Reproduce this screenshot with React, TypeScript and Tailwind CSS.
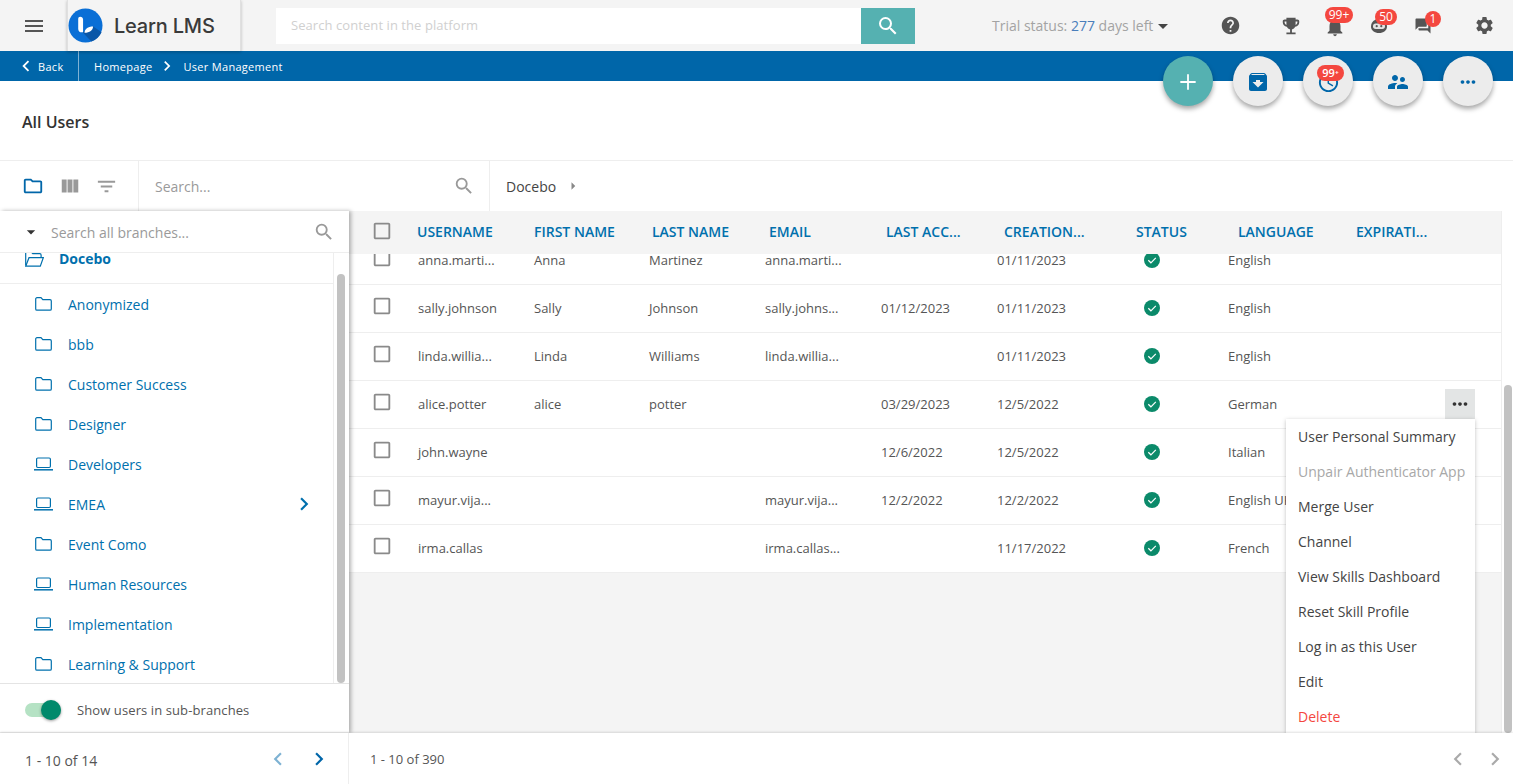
// App.tsx - user management page
import { Plus } from "lucide-react";
import {
  MdAccessTime,
  MdArchive,
  MdArrowDropDown,
  MdCheckBoxOutlineBlank,
  MdChevronLeft,
  MdChevronRight,
  MdEmojiEvents,
  MdFilterList,
  MdHelp,
  MdMenu,
  MdMoreHoriz,
  MdNotifications,
  MdOutlineFolder,
  MdQuestionAnswer,
  MdSearch,
  MdSettings,
  MdSupervisorAccount,
  MdViewColumn,
} from "react-icons/md";

const users = [
  { u: "anna.marti...", f: "Anna", l: "Martinez", e: "anna.marti...", a: "", c: "01/11/2023", g: "English" },
  { u: "sally.johnson", f: "Sally", l: "Johnson", e: "sally.johns...", a: "01/12/2023", c: "01/11/2023", g: "English" },
  { u: "linda.willia...", f: "Linda", l: "Williams", e: "linda.willia...", a: "", c: "01/11/2023", g: "English" },
  { u: "alice.potter", f: "alice", l: "potter", e: "", a: "03/29/2023", c: "12/5/2022", g: "German" },
  { u: "john.wayne", f: "", l: "", e: "", a: "12/6/2022", c: "12/5/2022", g: "Italian" },
  { u: "mayur.vija...", f: "", l: "", e: "mayur.vija...", a: "12/2/2022", c: "12/2/2022", g: "English UK" },
  { u: "irma.callas", f: "", l: "", e: "irma.callas...", a: "", c: "11/17/2022", g: "French" },
];

const branches = [
  { name: "Anonymized", laptop: false },
  { name: "bbb", laptop: false },
  { name: "Customer Success", laptop: false },
  { name: "Designer", laptop: false },
  { name: "Developers", laptop: true },
  { name: "EMEA", laptop: true, more: true },
  { name: "Event Como", laptop: false },
  { name: "Human Resources", laptop: true },
  { name: "Implementation", laptop: true },
  { name: "Learning & Support", laptop: false },
];

const menuItems = [
  "User Personal Summary",
  "Unpair Authenticator App",
  "Merge User",
  "Channel",
  "View Skills Dashboard",
  "Reset Skill Profile",
  "Log in as this User",
  "Edit",
  "Delete",
];

const columns = [
  { name: "USERNAME", w: "w-[117px]" },
  { name: "FIRST NAME", w: "w-[118px]" },
  { name: "LAST NAME", w: "w-[117px]" },
  { name: "EMAIL", w: "w-[117px]" },
  { name: "LAST ACC...", w: "w-[118px]" },
  { name: "CREATION...", w: "w-[132px]" },
  { name: "STATUS", w: "w-[102px]" },
  { name: "LANGUAGE", w: "w-[118px]" },
  { name: "EXPIRATI...", w: "w-[100px]" },
];

const Badge = ({ text, className }: { text: string; className: string }) => (
  <span
    className={`absolute h-[16px] rounded-full bg-[#f4473f] text-white text-[12px] leading-[16px] text-center ${className}`}
  >
    {text}
  </span>
);

const RobotIcon = () => (
  <svg viewBox="0 0 24 24" className="w-[24px] h-[24px] shrink-0" fill="#555">
    <path d="M12 5c-4.500 0-8 3-8 7.500C4 16.500 7.500 19 12 19s8-2.500 8-6.500C20 8 16.500 5 12 5z" />
    <rect x="6" y="9.500" width="12" height="5.500" rx="2.700" fill="#e4e4e4" />
    <circle cx="9.700" cy="12.200" r="1.100" />
    <circle cx="14.300" cy="12.200" r="1.100" />
  </svg>
);

const FolderIcon = () => (
  <svg viewBox="0 0 17 14" className="w-[17px] h-[14px] shrink-0" fill="none" stroke="currentColor" strokeWidth="1.200">
    <path d="M2 .7h4l1.800 2h7.200a1.300 1.300 0 0 1 1.300 1.300v7.900a1.300 1.300 0 0 1-1.300 1.300H2A1.300 1.300 0 0 1 .7 11.900V2A1.300 1.300 0 0 1 2 .7z" />
  </svg>
);

const LaptopIcon = () => (
  <svg viewBox="0 0 19 14" className="w-[19px] h-[14px] -ml-[1px] -mr-[1px] shrink-0" fill="none" stroke="currentColor" strokeWidth="1.200">
    <rect x="2.600" y="1" width="13.800" height="9.500" rx="1.200" />
    <path d="M0 12.800h19" strokeWidth="1.500" />
  </svg>
);

const OpenFolderIcon = () => (
  <svg viewBox="0 0 19 16" className="w-[19px] h-[16px] shrink-0 -mt-[2px]" fill="none" stroke="currentColor" strokeWidth="1.200">
    <path d="M.7 14.500V2A1.300 1.300 0 0 1 2 .7h4l1.800 2h7a1.300 1.300 0 0 1 1.300 1.300v2.700" />
    <path d="M.7 15.200 4 6.700h14.300l-3 8.500z" />
  </svg>
);

const StatusIcon = () => (
  <svg viewBox="0 0 16 16" className="w-[16px] h-[16px] -mt-[1px]">
    <circle cx="8" cy="8" r="8" fill="#0b8a6a" />
    <path d="M4.300 8.300 6.900 10.800 11.800 5.800" fill="none" stroke="#fff" strokeWidth="1.200" />
  </svg>
);

const LogoMark = () => (
  <svg viewBox="0 0 36 36" className="w-[35px] h-[35px] shrink-0">
    <circle cx="18" cy="18" r="17.500" fill="#0a6fd6" />
    <path d="M15 25 26 19 34.500 25A17.500 17.500 0 0 1 24 34.500z" fill="#0a57a8" />
    <path d="M12.500 9c1.800 0 3 1.200 3 3v13h-1.500c-2 0-3.500-1.500-3.500-3.500V11c0-1.200.8-2 2-2z" fill="#fff" />
    <path d="M17 25.500c0-3.800 3.500-6.500 8.800-6.500 0 3.800-3.500 6.500-8.800 6.500z" fill="#fff" />
  </svg>
);

const HeaderIcon = ({ className, children }: { className: string; children: React.ReactNode }) => (
  <div className={`relative w-[20px] shrink-0 flex items-center justify-center text-[#555] ${className}`}>{children}</div>
);

const RoundButton = ({ children, teal }: { children: React.ReactNode; teal?: boolean }) => (
  <div
    className={`relative w-[50px] h-[50px] rounded-full flex items-center justify-center shadow-[0_3px_5px_rgba(0,0,0,0.35)] ${
      teal ? "bg-[#55b1b1] text-white" : "bg-[#ececec] text-[#0066a9]"
    }`}
  >
    {children}
  </div>
);

const TopBar = () => (
  <header className="h-[51px] shrink-0 bg-[#f4f4f4] flex items-center relative">
    <div className="w-[67px] shrink-0 flex justify-center">
      <MdMenu className="text-[#555] text-[24px]" />
    </div>
    <div className="w-[174px] shrink-0 h-[51px] flex items-center gap-[11px] border-x border-[#e0e0e0] shadow-[0_1px_3px_rgba(0,0,0,0.25)]">
      <LogoMark />
      <span className="text-[20px] font-medium text-[#3a3a3a] font-['Inter',sans-serif] tracking-[-0.2px]">
        Learn LMS
      </span>
    </div>
    <div className="ml-[35px] w-[585px] shrink-0 h-[36px] bg-white flex items-center pl-[15px] pt-[1px] text-[13px] tracking-[0.07px] text-[#d0d0d0]">
      Search content in the platform
    </div>
    <div className="w-[54px] shrink-0 h-[36px] bg-[#55b1b1] flex items-center justify-center text-white">
      <MdSearch className="text-[24px]" />
    </div>
    <div className="ml-[77px] shrink-0 flex items-center text-[14px] text-[#a3a3a3] w-[190px]">
      Trial status:&nbsp;<span className="text-[#4a7ebb]">277</span>&nbsp;days left
      <MdArrowDropDown className="text-[#444] text-[24px] -ml-[2px]" />
    </div>
    <HeaderIcon className="ml-[38px]">
      <MdHelp className="text-[21px] shrink-0" />
    </HeaderIcon>
    <HeaderIcon className="ml-[41px]">
      <MdEmojiEvents className="text-[22px] shrink-0" />
    </HeaderIcon>
    <HeaderIcon className="ml-[24px]">
      <MdNotifications className="text-[22px] shrink-0 mt-[2px]" />
      <Badge text="99+" className="w-[28px] -top-[7px] left-0" />
    </HeaderIcon>
    <HeaderIcon className="ml-[24px]">
      <RobotIcon />
      <Badge text="50" className="w-[22px] -top-[5px] left-[6px]" />
    </HeaderIcon>
    <HeaderIcon className="ml-[24px]">
      <MdQuestionAnswer className="text-[18px] shrink-0" />
      <Badge text="1" className="w-[16px] -top-[6px] left-[12px]" />
    </HeaderIcon>
    <HeaderIcon className="ml-[41px]">
      <MdSettings className="text-[21px] shrink-0" />
    </HeaderIcon>
  </header>
);

const Breadcrumb = () => (
  <nav className="h-[30px] shrink-0 bg-[#0066a9] flex items-center text-white text-[11px] font-medium tracking-[0.3px]">
    <div className="w-[79px] h-full flex items-center pl-[15px] gap-[1px] border-r border-[#7fb2d4]">
      <MdChevronLeft className="text-[22px] shrink-0" />
      <span className="mt-[2px]">Back</span>
    </div>
    <span className="ml-[15px] mt-[2px]">Homepage</span>
    <MdChevronRight className="text-[20px] ml-[5px] mr-[6px]" />
    <span className="mt-[2px]">User Management</span>
  </nav>
);

const Toolbar = () => (
  <div className="h-[51px] shrink-0 flex border-t border-[#eeeeee]">
    <div className="w-[139px] flex items-center pl-[22px] border-r border-[#eeeeee]">
      <MdOutlineFolder className="text-[#0066a9] text-[22px]" />
      <MdViewColumn className="text-[#999] text-[22px] ml-[15px]" />
      <MdFilterList className="text-[#999] text-[23px] ml-[14px]" />
    </div>
    <div className="w-[351px] flex items-center justify-between pl-[16px] pr-[14px] border-r border-[#eeeeee] text-[14px] text-[#9a9a9a]">
      <span>Search...</span>
      <MdSearch className="text-[#999] text-[22px]" />
    </div>
    <div className="flex items-center pl-[16px] text-[14px] text-[#444]">
      Docebo
      <MdArrowDropDown className="text-[#888] text-[18px] -rotate-90 ml-[8px]" />
    </div>
  </div>
);

const BranchPanel = () => (
  <aside className="w-[349px] shrink-0 flex flex-col bg-white shadow-[2px_0_4px_rgba(0,0,0,0.3)] z-10 relative">
    <div className="h-[42px] shrink-0 flex items-center pl-[21px] pr-[14px] pt-[1px] border-b border-[#eeeeee] text-[14px] text-[#9a9a9a]">
      <MdArrowDropDown className="text-[#333] text-[20px]" />
      <span className="ml-[10px] flex-1">Search all branches...</span>
      <MdSearch className="text-[#999] text-[22px]" />
    </div>
    <div className="flex-1 flex min-h-0 overflow-hidden border-b border-[#e4e4e4]">
      <div className="flex-1 text-[#0070ad] text-[14px]">
        <div className="h-[31px] flex items-start pl-[25px] gap-[15px] border-b border-[#eeeeee] font-bold text-[14px]">
          <OpenFolderIcon />
          <span className="-mt-[5px]">Docebo</span>
        </div>
        {branches.map((b) => (
          <div key={b.name} className="h-[40px] flex items-center pl-[35px] pr-[18px] gap-[16px]">
            {b.laptop ? <LaptopIcon /> : <FolderIcon />}
            <span className="flex-1 text-[14px]">{b.name}</span>
            {b.more && <MdChevronRight className="text-[26px] -mr-[2px]" />}
          </div>
        ))}
      </div>
      <div className="w-[16px] shrink-0 border-l border-[#eeeeee] pt-[21px] pl-[3px]">
        <div className="w-[8px] h-full rounded-full bg-[#c2c2c2]" />
      </div>
    </div>
    <div className="h-[49px] shrink-0 flex items-center pl-[25px] pt-[4px] border-b border-[#eeeeee]">
      <div className="relative w-[36px] h-[14px] rounded-full bg-[#b5e2c4]">
        <div className="absolute -top-[3px] left-[16px] w-[20px] h-[20px] rounded-full bg-[#00896b] shadow-[0_1px_3px_rgba(0,0,0,0.4)]" />
      </div>
      <span className="ml-[16px] mt-[2px] text-[13px] tracking-[0.1px] text-[#555]">Show users in sub-branches</span>
    </div>
  </aside>
);

const UserTable = () => (
  <section className="flex-1 min-w-0 flex bg-[#f4f4f4] relative">
    <div className="flex-1 min-w-0 flex flex-col">
      <div className="h-[43px] shrink-0 flex items-center bg-[#f4f4f4] pl-[22px] pb-[2px] text-[14px] font-semibold text-[#0070ad]">
        <div className="w-[46px] shrink-0 -mt-[1px]">
          <MdCheckBoxOutlineBlank className="text-[#8a8a8a] text-[22px]" />
        </div>
        {columns.map((c) => (
          <div key={c.name} className={`${c.w} shrink-0 whitespace-nowrap`}>
            {c.name}
          </div>
        ))}
      </div>
      <div className="overflow-hidden">
        <div className="-mt-[17px]">
          {users.map((r) => (
            <div
              key={r.u}
              className="h-[48px] bg-white flex items-center border-b border-[#eeeeee] pl-[69px] text-[13px] text-[#555] relative"
            >
              <MdCheckBoxOutlineBlank className="absolute left-[22px] top-[10px] text-[#8a8a8a] text-[22px]" />
              <div className="w-[116px] shrink-0">{r.u}</div>
              <div className="w-[115px] shrink-0">{r.f}</div>
              <div className="w-[116px] shrink-0">{r.l}</div>
              <div className="w-[116px] shrink-0">{r.e}</div>
              <div className="w-[116px] shrink-0">{r.a}</div>
              <div className="w-[116px] shrink-0">{r.c}</div>
              <div className="w-[115px] shrink-0 pl-[31px]">
                <StatusIcon />
              </div>
              <div className="w-[100px] shrink-0 whitespace-nowrap">{r.g}</div>
              {r.u === "alice.potter" && (
                <div className="absolute left-[1096px] top-[8px] w-[30px] h-[30px] bg-[#e3e5e5] flex items-center justify-center text-[#333]">
                  <MdMoreHoriz className="text-[22px]" />
                </div>
              )}
            </div>
          ))}
        </div>
      </div>
    </div>
    <div className="w-[12px] shrink-0 bg-white border-l border-[#eeeeee] pt-[174px] pl-[2px]">
      <div className="w-[8px] h-full rounded-full bg-[#c2c2c2]" />
    </div>
    <div className="absolute left-[937px] top-[208px] w-[189px] h-[314px] overflow-hidden bg-white shadow-[0_1px_4px_rgba(0,0,0,0.25)] pl-[12px] text-[14px] text-[#444]">
      {menuItems.map((m) => (
        <div
          key={m}
          className={`h-[35px] flex items-center whitespace-nowrap ${
            m === "Delete" ? "text-[#f4473f]" : m.startsWith("Unpair") ? "text-[#a8a8a8]" : ""
          }`}
        >
          {m}
        </div>
      ))}
    </div>
  </section>
);

const Footer = () => (
  <footer className="h-[51px] shrink-0 flex bg-white z-20 shadow-[0_-1px_2px_rgba(0,0,0,0.12)] text-[14px] text-[#555]">
    <div className="w-[349px] flex items-center pl-[25px] pr-[16px] pt-[3px] border-r border-[#eeeeee]">
      <span className="flex-1">1 - 10 of 14</span>
      <MdChevronLeft className="text-[#7eb2d3] text-[26px] mr-[15px] -mt-[3px]" />
      <MdChevronRight className="text-[#0066a9] text-[26px] -mt-[3px]" />
    </div>
    <div className="flex-1 flex items-center pl-[21px] pr-[5px]">
      <span className="flex-1 text-[13px] pt-[2px]">1 - 10 of 390</span>
      <MdChevronLeft className="text-[#aaaaaa] text-[26px] mr-[11px]" />
      <MdChevronRight className="text-[#aaaaaa] text-[26px]" />
    </div>
  </footer>
);

const App = () => {
  return (
    <div className="relative h-screen w-full overflow-hidden bg-white flex flex-col font-['Open_Sans',sans-serif]">
      <TopBar />
      <Breadcrumb />
      <div className="h-[79px] shrink-0 flex items-center pl-[22px] pt-[2px] text-[16px] font-semibold text-[#333]">
        All Users
      </div>
      <Toolbar />
      <main className="flex-1 min-h-0 flex">
        <BranchPanel />
        <UserTable />
      </main>
      <Footer />
      {/* floating actions over the breadcrumb */}
      <div className="absolute top-[56px] right-[20px] flex gap-[20px] z-30">
        <RoundButton teal>
          <Plus size={24} strokeWidth={1.800} className="mt-[1px] -ml-[1px]" />
        </RoundButton>
        <RoundButton>
          <MdArchive className="text-[24px] mt-[2px]" />
        </RoundButton>
        <RoundButton>
          <MdAccessTime className="text-[23px] mt-[2px]" />
          <span className="absolute top-[9px] left-[14px] w-[27px] h-[16px] rounded-full bg-[#f4473f] text-white text-[11px] font-semibold leading-[16px] text-center">
            99⁺
          </span>
        </RoundButton>
        <RoundButton>
          <MdSupervisorAccount className="text-[24px] mt-[2px]" />
        </RoundButton>
        <RoundButton>
          <MdMoreHoriz className="text-[22px] mt-[2px]" />
        </RoundButton>
      </div>
    </div>
  );
};

export default App;
